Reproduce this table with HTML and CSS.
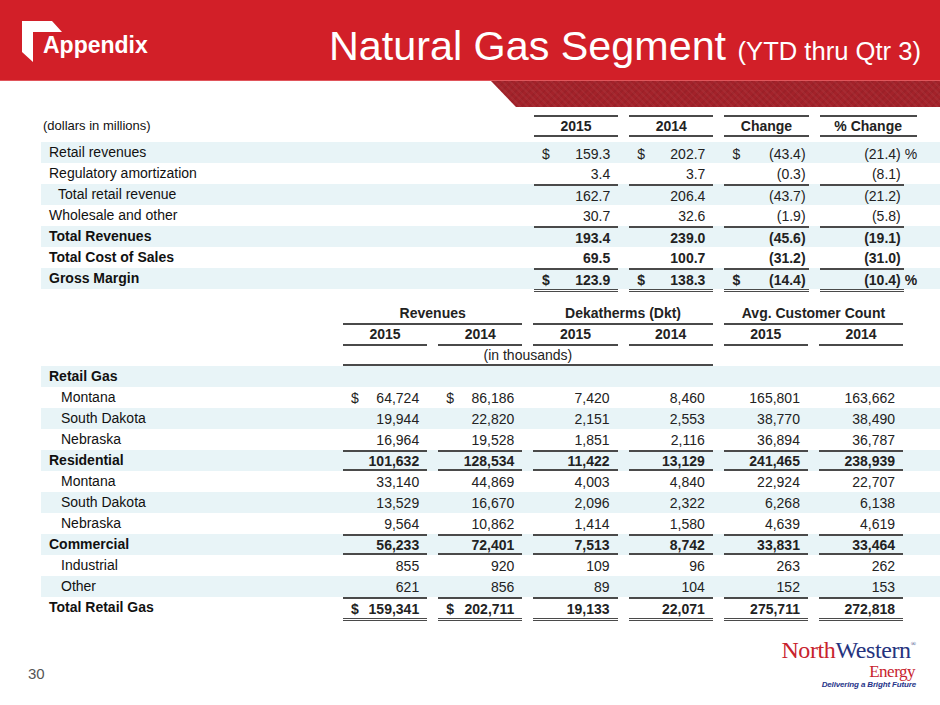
FILE: index.html
```html
<!DOCTYPE html>
<html lang="en">
<head>
<meta charset="utf-8">
<title>Natural Gas Segment</title>
<link rel="stylesheet" href="styles.css">
</head>
<body>
<header class="topbar">
  <div class="badge">
    <svg viewBox="0 0 41 42" aria-hidden="true"><polygon points="0,0 30,0 40,11 11,11 11,41 0,31" fill="#fff"/></svg>
    <span class="badge-text">Appendix</span>
  </div>
  <h1 class="title">Natural Gas Segment <span class="sub">(YTD thru Qtr 3)</span></h1>
</header>
<div class="strip"><div class="pattern"></div></div>

<main class="content">
  <section class="t1">
    <div class="row hrow">
      <div class="l cap">(dollars in millions)</div>
      <div class="h">2015</div>
      <div class="h">2014</div>
      <div class="h">Change</div>
      <div class="h span2">% Change</div>
    </div>
    <div class="row s">
      <div class="l">Retail revenues</div>
      <div class="v"><span>$</span><span class="n">159.3</span></div>
      <div class="v"><span>$</span><span class="n">202.7</span></div>
      <div class="v p"><span>$</span><span class="n">(43.4)</span></div>
      <div class="v p"><span class="n">(21.4)</span></div>
      <div class="pct">%</div>
    </div>
    <div class="row">
      <div class="l">Regulatory amortization</div>
      <div class="v"><span class="n">3.4</span></div>
      <div class="v"><span class="n">3.7</span></div>
      <div class="v p"><span class="n">(0.3)</span></div>
      <div class="v p"><span class="n">(8.1)</span></div>
    </div>
    <div class="row s top">
      <div class="l in">Total retail revenue</div>
      <div class="v"><span class="n">162.7</span></div>
      <div class="v"><span class="n">206.4</span></div>
      <div class="v p"><span class="n">(43.7)</span></div>
      <div class="v p"><span class="n">(21.2)</span></div>
    </div>
    <div class="row">
      <div class="l">Wholesale and other</div>
      <div class="v"><span class="n">30.7</span></div>
      <div class="v"><span class="n">32.6</span></div>
      <div class="v p"><span class="n">(1.9)</span></div>
      <div class="v p"><span class="n">(5.8)</span></div>
    </div>
    <div class="row s top b">
      <div class="l">Total Revenues</div>
      <div class="v"><span class="n">193.4</span></div>
      <div class="v"><span class="n">239.0</span></div>
      <div class="v p"><span class="n">(45.6)</span></div>
      <div class="v p"><span class="n">(19.1)</span></div>
    </div>
    <div class="row b">
      <div class="l">Total Cost of Sales</div>
      <div class="v"><span class="n">69.5</span></div>
      <div class="v"><span class="n">100.7</span></div>
      <div class="v p"><span class="n">(31.2)</span></div>
      <div class="v p"><span class="n">(31.0)</span></div>
    </div>
    <div class="row s top b last">
      <div class="l">Gross Margin</div>
      <div class="v"><span>$</span><span class="n">123.9</span></div>
      <div class="v"><span>$</span><span class="n">138.3</span></div>
      <div class="v p"><span>$</span><span class="n">(14.4)</span></div>
      <div class="v p"><span class="n">(10.4)</span></div>
      <div class="pct">%</div>
    </div>
  </section>

  <section class="t2">
    <div class="row grow">
      <div class="l"></div>
      <div class="g">Revenues</div>
      <div class="g">Dekatherms (Dkt)</div>
      <div class="g">Avg. Customer Count</div>
    </div>
    <div class="row yrow">
      <div class="l"></div>
      <div class="y">2015</div>
      <div class="y">2014</div>
      <div class="y">2015</div>
      <div class="y">2014</div>
      <div class="y">2015</div>
      <div class="y">2014</div>
    </div>
    <div class="row trow">
      <div class="l"></div>
      <div class="unit">(in thousands)</div>
    </div>
    <div class="row s b">
      <div class="l">Retail Gas</div>
    </div>
    <div class="row">
      <div class="l sub">Montana</div>
      <div class="v"><span>$</span><span class="n">64,724</span></div>
      <div class="v"><span>$</span><span class="n">86,186</span></div>
      <div class="v"><span class="n">7,420</span></div>
      <div class="v"><span class="n">8,460</span></div>
      <div class="v"><span class="n">165,801</span></div>
      <div class="v"><span class="n">163,662</span></div>
    </div>
    <div class="row s">
      <div class="l sub">South Dakota</div>
      <div class="v"><span class="n">19,944</span></div>
      <div class="v"><span class="n">22,820</span></div>
      <div class="v"><span class="n">2,151</span></div>
      <div class="v"><span class="n">2,553</span></div>
      <div class="v"><span class="n">38,770</span></div>
      <div class="v"><span class="n">38,490</span></div>
    </div>
    <div class="row">
      <div class="l sub">Nebraska</div>
      <div class="v"><span class="n">16,964</span></div>
      <div class="v"><span class="n">19,528</span></div>
      <div class="v"><span class="n">1,851</span></div>
      <div class="v"><span class="n">2,116</span></div>
      <div class="v"><span class="n">36,894</span></div>
      <div class="v"><span class="n">36,787</span></div>
    </div>
    <div class="row s b top bot">
      <div class="l">Residential</div>
      <div class="v"><span class="n">101,632</span></div>
      <div class="v"><span class="n">128,534</span></div>
      <div class="v"><span class="n">11,422</span></div>
      <div class="v"><span class="n">13,129</span></div>
      <div class="v"><span class="n">241,465</span></div>
      <div class="v"><span class="n">238,939</span></div>
    </div>
    <div class="row">
      <div class="l sub">Montana</div>
      <div class="v"><span class="n">33,140</span></div>
      <div class="v"><span class="n">44,869</span></div>
      <div class="v"><span class="n">4,003</span></div>
      <div class="v"><span class="n">4,840</span></div>
      <div class="v"><span class="n">22,924</span></div>
      <div class="v"><span class="n">22,707</span></div>
    </div>
    <div class="row s">
      <div class="l sub">South Dakota</div>
      <div class="v"><span class="n">13,529</span></div>
      <div class="v"><span class="n">16,670</span></div>
      <div class="v"><span class="n">2,096</span></div>
      <div class="v"><span class="n">2,322</span></div>
      <div class="v"><span class="n">6,268</span></div>
      <div class="v"><span class="n">6,138</span></div>
    </div>
    <div class="row">
      <div class="l sub">Nebraska</div>
      <div class="v"><span class="n">9,564</span></div>
      <div class="v"><span class="n">10,862</span></div>
      <div class="v"><span class="n">1,414</span></div>
      <div class="v"><span class="n">1,580</span></div>
      <div class="v"><span class="n">4,639</span></div>
      <div class="v"><span class="n">4,619</span></div>
    </div>
    <div class="row s b top bot">
      <div class="l">Commercial</div>
      <div class="v"><span class="n">56,233</span></div>
      <div class="v"><span class="n">72,401</span></div>
      <div class="v"><span class="n">7,513</span></div>
      <div class="v"><span class="n">8,742</span></div>
      <div class="v"><span class="n">33,831</span></div>
      <div class="v"><span class="n">33,464</span></div>
    </div>
    <div class="row">
      <div class="l sub">Industrial</div>
      <div class="v"><span class="n">855</span></div>
      <div class="v"><span class="n">920</span></div>
      <div class="v"><span class="n">109</span></div>
      <div class="v"><span class="n">96</span></div>
      <div class="v"><span class="n">263</span></div>
      <div class="v"><span class="n">262</span></div>
    </div>
    <div class="row s">
      <div class="l sub">Other</div>
      <div class="v"><span class="n">621</span></div>
      <div class="v"><span class="n">856</span></div>
      <div class="v"><span class="n">89</span></div>
      <div class="v"><span class="n">104</span></div>
      <div class="v"><span class="n">152</span></div>
      <div class="v"><span class="n">153</span></div>
    </div>
    <div class="row b top last">
      <div class="l">Total Retail Gas</div>
      <div class="v"><span>$</span><span class="n">159,341</span></div>
      <div class="v"><span>$</span><span class="n">202,711</span></div>
      <div class="v"><span class="n">19,133</span></div>
      <div class="v"><span class="n">22,071</span></div>
      <div class="v"><span class="n">275,711</span></div>
      <div class="v"><span class="n">272,818</span></div>
    </div>
  </section>
</main>

<footer class="foot">
  <div class="page">30</div>
  <div class="logo">
    <div class="brand"><span class="north">North</span><span class="west">Western</span><span class="reg">®</span></div>
    <div class="energy">Energy</div>
    <div class="tag">Delivering a Bright Future</div>
  </div>
</footer>
</body>
</html>
```
FILE: styles.css
```css
html, body {
  margin: 0;
  padding: 0;
}
body {
  width: 940px;
  height: 705px;
  overflow: hidden;
  background: #fff;
  color: #222;
  font-family: "Liberation Sans", Arial, Helvetica, sans-serif;
  font-size: 14px;
}

/* header */
.topbar {
  height: 81px;
  box-sizing: border-box;
  border-bottom: 1px solid #e0555b;
  background: #d21f28;
  display: flex;
  justify-content: space-between;
  align-items: flex-start;
}
.badge {
  display: flex;
  align-items: flex-start;
  padding: 21px 0 0 22px;
}
.badge svg {
  width: 41px;
  height: 42px;
  flex: none;
}
.badge-text {
  margin: 13px 0 0 -20px;
  color: #fff;
  font-weight: bold;
  font-size: 23px;
  line-height: 23px;
}
.title {
  margin: 0;
  padding: 25px 19px 0 0;
  color: #fff;
  font-weight: normal;
  font-size: 41.3px;
  line-height: 42px;
  white-space: nowrap;
}
.title .sub {
  font-size: 25.6px;
}
.strip {
  height: 26px;
  display: flex;
  justify-content: flex-end;
}
.pattern {
  width: 449px;
  background-color: #a3222a;
  background-image:
    repeating-linear-gradient(45deg, rgba(255,255,255,0.04) 0 2px, transparent 2px 5px),
    repeating-linear-gradient(-45deg, rgba(0,0,0,0.05) 0 2px, transparent 2px 5px);
  clip-path: polygon(0 0, 100% 0, 100% 100%, 25px 100%);
}

/* tables */
.content {
  padding: 8px 0 0 41px;
}
.row {
  display: grid;
  height: 21px;
  box-sizing: border-box;
}
.t1 .row {
  grid-template-columns: 482px repeat(4, 95.2px) 13px;
}
.t2 {
  margin-top: 11px;
}
.t2 .row {
  grid-template-columns: 291px repeat(6, 95.2px);
}
.row.s {
  background: #e8f4f7;
}
.row.b {
  font-weight: bold;
}
.l {
  padding-left: 8px;
  line-height: 21px;
  white-space: nowrap;
  color: #111;
}
.l.in { padding-left: 17px; }
.l.sub { padding-left: 20px; }
.l.cap {
  padding-left: 2px;
  font-size: 13px;
  line-height: 22px;
}

.v {
  margin-left: 11px;
  display: flex;
  align-items: center;
  padding: 0 8px;
  box-sizing: border-box;
  white-space: nowrap;
}
.v.p { padding-right: 3px; }
.v .n { margin-left: auto; }
.pct {
  padding: 2px 0 0 1px;
  line-height: 21px;
}

.row.top .v { border-top: 2px solid #4a4a4a; }
.row.bot .v { border-bottom: 2px solid #4a4a4a; }
.row.last {
  height: 24px;
}
.row.last .v {
  border-bottom: 3px double #4a4a4a;
}
.row.last.s {
  background: linear-gradient(#e8f4f7, #e8f4f7) 0 0 / 100% 21px no-repeat;
}

/* table 1 header */
.t1 .row.hrow {
  height: 22px;
  margin-bottom: 5px;
}
.h {
  margin-left: 11px;
  border-top: 2px solid #4a4a4a;
  border-bottom: 2px solid #4a4a4a;
  box-sizing: border-box;
  text-align: center;
  font-weight: bold;
  line-height: 18px;
}
.h.span2 { grid-column: span 2; }

/* table 2 header */
.t2 .row.grow { height: 22px; }
.g {
  grid-column: span 2;
  margin-left: 11px;
  border-bottom: 2px solid #4a4a4a;
  box-sizing: border-box;
  text-align: center;
  font-weight: bold;
  line-height: 20px;
}
.t2 .row.yrow { height: 21px; }
.y {
  margin-left: 11px;
  border-bottom: 2px solid #4a4a4a;
  box-sizing: border-box;
  text-align: center;
  font-weight: bold;
  line-height: 19px;
}
.t2 .row.trow { height: 20px; }
.unit {
  grid-column: span 4;
  margin-left: 11px;
  border-bottom: 2px solid #4a4a4a;
  box-sizing: border-box;
  text-align: center;
  line-height: 18px;
}

/* footer */
.foot {
  display: flex;
  justify-content: space-between;
  align-items: flex-start;
  padding: 0 24px 0 28px;
}
.page {
  margin-top: 44px;
  font-size: 15px;
  line-height: 18px;
  color: #555;
}
.logo {
  margin-top: 11px;
  text-align: right;
}
.brand {
  font-family: "Liberation Serif", "Times New Roman", serif;
  font-size: 24px;
  line-height: 24px;
  letter-spacing: -0.4px;
  white-space: nowrap;
}
.north { color: #c8232c; }
.west { color: #25337e; }
.reg {
  font-size: 7px;
  vertical-align: 12px;
  color: #25337e;
  letter-spacing: 0;
}
.energy {
  margin-top: 1px;
  font-family: "Liberation Serif", "Times New Roman", serif;
  font-size: 17px;
  line-height: 17px;
  letter-spacing: -0.5px;
  color: #c8232c;
  padding-right: 1px;
}
.tag {
  font-size: 8px;
  line-height: 10px;
  font-weight: bold;
  font-style: italic;
  color: #27358a;
  letter-spacing: -0.15px;
  white-space: nowrap;
}
```
